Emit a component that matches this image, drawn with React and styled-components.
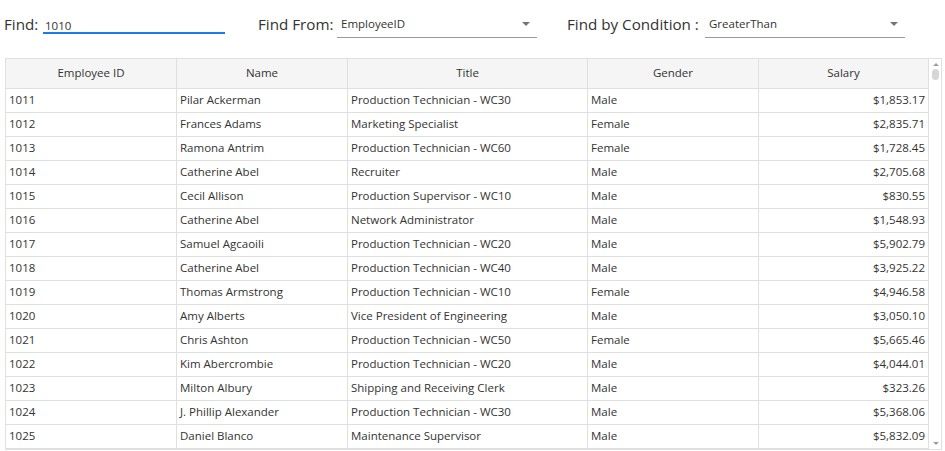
import React from "react";
import styled, { createGlobalStyle } from "styled-components";

const Global = createGlobalStyle`
  html, body { margin: 0; padding: 0; background: #fff; }
  body { font-family: "Segoe UI", "Open Sans", "Noto Sans", sans-serif; color: #333; }
  * { box-sizing: border-box; }
`;

const Page = styled.div`
  width: 945px;
  height: 451px;
  overflow: hidden;
`;

const Toolbar = styled.div`
  display: flex;
  align-items: flex-start;
  height: 58px;
  padding: 10px 0 0 4px;
`;

const Group = styled.div`
  display: flex;
  align-items: flex-start;
  width: ${(p) => p.$w}px;
  margin-right: ${(p) => p.$gap || 0}px;
`;

const Label = styled.label`
  flex: 1;
  font-size: 15.2px;
  line-height: 28px;
  color: #333;
  white-space: nowrap;
`;

const TextInput = styled.div`
  width: ${(p) => p.$w}px;
  height: 24px;
  border-bottom: 2px solid #1a7cf2;
  font-size: 11.5px;
  line-height: 16px;
  padding: 8px 0 0 2px;
  color: #333;
`;

const Select = styled.div`
  position: relative;
  width: ${(p) => p.$w}px;
  height: 28px;
  border-bottom: 1px solid #9a9a9a;
  font-size: 11.5px;
  line-height: 18px;
  padding: 5px 0 0 4px;
  color: #333;
`;

const Caret = styled.span`
  position: absolute;
  right: 7px;
  top: 12px;
  width: 0;
  height: 0;
  border-left: 4px solid transparent;
  border-right: 4px solid transparent;
  border-top: 4px solid #757575;
`;

const GridBox = styled.div`
  display: flex;
  margin-left: 5px;
  width: 937px;
  height: 392px;
  border: 1px solid #e0e0e0;
`;

const Table = styled.div`
  display: grid;
  grid-template-columns: 171px 171px 240px 171px 170px;
  grid-auto-rows: 24px;
  grid-template-rows: 30px;
  width: 923px;
  flex: none;
`;

const HeadCell = styled.div`
  background: #f5f5f5;
  border-right: 1px solid #e0e0e0;
  border-bottom: 1px solid #e0e0e0;
  font-size: 11.5px;
  color: #333;
  display: flex;
  align-items: center;
  justify-content: center;
  padding-bottom: 2px;
`;

const Cell = styled.div`
  border-right: 1px solid #e0e0e0;
  border-bottom: 1px solid #e0e0e0;
  font-size: 11.5px;
  color: #333;
  display: flex;
  align-items: center;
  justify-content: ${(p) => (p.$right ? "flex-end" : "flex-start")};
  padding: 0 3px 2px 3px;
  white-space: nowrap;
  overflow: hidden;
`;

const ScrollBar = styled.div`
  flex: 1;
  position: relative;
  background: #fff;
`;

const ArrowUp = styled.span`
  position: absolute;
  left: 4px;
  top: 4px;
  border-left: 3px solid transparent;
  border-right: 3px solid transparent;
  border-bottom: 3px solid #9e9e9e;
`;

const ArrowDown = styled.span`
  position: absolute;
  left: 4px;
  bottom: 4px;
  border-left: 3px solid transparent;
  border-right: 3px solid transparent;
  border-top: 3px solid #9e9e9e;
`;

const Thumb = styled.span`
  position: absolute;
  left: 3px;
  top: 10px;
  width: 7px;
  height: 11px;
  border-radius: 4px;
  background: #d6d6d6;
`;

const rows = [
  ["1011", "Pilar Ackerman", "Production Technician - WC30", "Male", "$1,853.17"],
  ["1012", "Frances Adams", "Marketing Specialist", "Female", "$2,835.71"],
  ["1013", "Ramona Antrim", "Production Technician - WC60", "Female", "$1,728.45"],
  ["1014", "Catherine Abel", "Recruiter", "Male", "$2,705.68"],
  ["1015", "Cecil Allison", "Production Supervisor - WC10", "Male", "$830.55"],
  ["1016", "Catherine Abel", "Network Administrator", "Male", "$1,548.93"],
  ["1017", "Samuel Agcaoili", "Production Technician - WC20", "Male", "$5,902.79"],
  ["1018", "Catherine Abel", "Production Technician - WC40", "Male", "$3,925.22"],
  ["1019", "Thomas Armstrong", "Production Technician - WC10", "Female", "$4,946.58"],
  ["1020", "Amy Alberts", "Vice President of Engineering", "Male", "$3,050.10"],
  ["1021", "Chris Ashton", "Production Technician - WC50", "Female", "$5,665.46"],
  ["1022", "Kim Abercrombie", "Production Technician - WC20", "Male", "$4,044.01"],
  ["1023", "Milton Albury", "Shipping and Receiving Clerk", "Male", "$323.26"],
  ["1024", "J. Phillip Alexander", "Production Technician - WC30", "Male", "$5,368.06"],
  ["1025", "Daniel Blanco", "Maintenance Supervisor", "Male", "$5,832.09"],
];

const headers = ["Employee ID", "Name", "Title", "Gender", "Salary"];

export default function App() {
  return (
    <Page>
      <Global />
      <Toolbar>
        <Group $w={221} $gap={33}>
          <Label>Find:</Label>
          <TextInput $w={182}>1010</TextInput>
        </Group>
        <Group $w={279} $gap={30}>
          <Label>Find From:</Label>
          <Select $w={200}>
            EmployeeID
            <Caret />
          </Select>
        </Group>
        <Group $w={338}>
          <Label>Find by Condition :</Label>
          <Select $w={200}>
            GreaterThan
            <Caret />
          </Select>
        </Group>
      </Toolbar>
      <GridBox>
        <Table>
          {headers.map((h) => (
            <HeadCell key={h}>{h}</HeadCell>
          ))}
          {rows.map((r) =>
            r.map((v, i) => (
              <Cell key={r[0] + i} $right={i === 4}>
                {v}
              </Cell>
            ))
          )}
        </Table>
        <ScrollBar>
          <ArrowUp />
          <Thumb />
          <ArrowDown />
        </ScrollBar>
      </GridBox>
    </Page>
  );
}
